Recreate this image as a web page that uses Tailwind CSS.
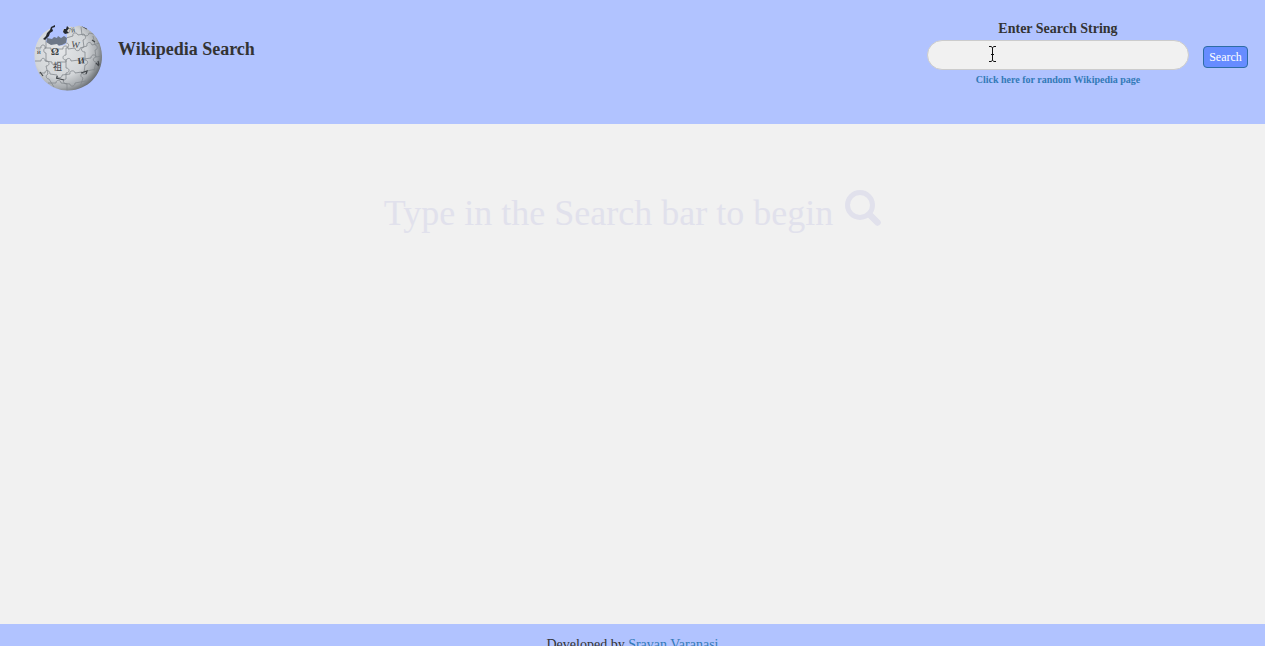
<!DOCTYPE html>
<html lang="en">
<head>
<meta charset="utf-8">
<meta name="viewport" content="width=device-width, initial-scale=1">
<title>Wikipedia Search</title>
<script src="https://cdn.jsdelivr.net/npm/@tailwindcss/browser@4"></script>
</head>
<body class="flex min-h-screen flex-col bg-[#f1f1f1] font-['Liberation_Serif',serif] text-sm text-[#333]">
<header class="flex min-h-[124px] items-start justify-between bg-[#b1c3ff] pr-[17px] pl-[33px]">
  <div class="flex items-start gap-[15px] pt-[22px]">
    <svg class="size-[70px]" viewBox="9 8 70 70" role="img" aria-label="Wikipedia globe">
      <defs>
        <radialGradient id="ball" cx="38%" cy="40%" r="66%">
          <stop offset="0" stop-color="#e4e6e8"/><stop offset=".6" stop-color="#d2d5d8"/><stop offset=".82" stop-color="#a8acb0"/><stop offset="1" stop-color="#5d6267"/>
        </radialGradient>
        <clipPath id="shell"><path d="M27 14 C16 19 10 30 10.500 43 C11 63 27 77 44.500 76.500 C64 76 78 61 78 42.500 C78 27 69 15 55 11.500 L50 13 L44 12.500 L42 15 L39 15 L39 18 L43 20 L43 28 L41 31 L35 32 L33 30 L27 31 L22 28 L22 24 L25 21 L28 15 Z"/></clipPath>
      </defs>
      <path d="M23 24 L28 25 L30 23 L33 24 L34 22 L37 24 L40 22 L43 24 L42 29 L38 31 L28 33 L22 30 Z" fill="#6d7787"/>
      <g clip-path="url(#shell)">
        <circle cx="44" cy="43" r="34.500" fill="url(#ball)"/>
        <g fill="none" stroke="#83888d" stroke-width=".8">
          <path d="M12 34 h5 c-1-4 5-4 4 0 h6 c-1 4 5 5 5 1 h7 c-1-4 6-4 5 0 l7-1 c0 4 6 3 5 0 l7-2 c-1-4 4-5 5-1 l8-2"/>
          <path d="M11 47 h6 c0-4 5-3 4 0 l7 1 c-1 4 6 4 5 0 l9 0 c-1-4 5-5 5-1 l8-1 c0 4 6 3 5-1 l7-1 c0-4 5-4 5-1 l6-1"/>
          <path d="M15 59 l6 0 c0-4 5-3 5 1 l7 1 c0 4 6 3 5 0 l8-1 c-1-4 5-4 5-1 l7-1 c0 4 6 3 5-1 l9-2"/>
          <path d="M24 69 l8 0 c0-4 5-3 5 0 l9 1 c0 3 5 3 5-1 l11-2"/>
          <path d="M22 25 v9 c-3 0-3 5 0 5 v8 c4 0 4 5 0 5 l2 8 c-3 1-2 5 1 5 l5 8"/>
          <path d="M42 24 v5 c4 0 3 5 0 5 v7 c-4 0-4 5 0 5 v8 c4 0 4 5 0 5 v6 c-4 1-3 5 1 5 v7"/>
          <path d="M57 13 l1 8 c4-1 5 4 1 5 l1 7 c-4 1-3 5 1 5 l0 8 c4 0 3 5 0 5 l-1 8 c-4 0-4 4-1 5 l-3 9"/>
          <path d="M42 24 l7-2 c-1-4 4-4 5-1 l6-1 c1 3 5 2 5-1 l5 1 M69 22 l2 9 c3 0 3 5 0 5 l1 7 c-4 1-3 5 0 5 l-2 9"/>
        </g>
        <g class="font-['Liberation_Serif','Noto_Sans_CJK_JP',serif]" fill="#3c3f44" aria-hidden="true">
          <text x="27" y="41" font-size="10" font-weight="700">Ω</text>
          <text x="47" y="33" font-size="9" transform="rotate(8 47 33)">W</text>
          <text x="54" y="50" font-size="9" font-weight="700" transform="rotate(-6 54 50)">И</text>
          <text x="29" y="56" font-size="9">祖</text>
          <text x="44" y="19" font-size="7" transform="rotate(-8 44 19)">7й</text>
          <text x="13" y="40" font-size="7">й</text>
        </g>
        <path d="M32 64 l8 2 M33 62 v3 M57 59 l6-2 -1 3 M16 58 l3 4 M72 49 l3 3 M74 47 l1 4 M68 26 l3 2 M58 12 l5 3" fill="none" stroke="#42464a" stroke-width="1.200"/>
      </g>
      <path d="M31 11 L27 13 L26 16 L23 19 L22 22 L19 25 L21 26 L25 22 L26 19 L29 17 L28 14 L31 13 Z M39 18 L40 15 L42 15 L43 12 L45 14 L43 17 L45 19 L41 20 Z" fill="#25282f"/>
    </svg>
    <h1 class="pt-[17px] text-lg leading-5 font-bold">Wikipedia Search</h1>
  </div>
  <form class="flex items-start gap-3.5 pt-5">
    <div class="flex w-[262px] flex-col items-center">
      <label for="query" class="mb-0.5 text-sm leading-[18px] font-bold">Enter Search String</label>
      <input id="query" type="text" class="h-[30px] w-full rounded-full border border-[#ccc] bg-[#f1f1f1] px-3 outline-none">
      <a href="#random" class="mt-1 text-[10px] leading-3 font-bold text-[#337ab7]">Click here for random Wikipedia page</a>
    </div>
    <button type="button" class="mt-[26px] h-[22px] w-[45px] rounded-[4px] border border-[#2e6da4] bg-[#668cff] text-xs leading-5 text-white">Search</button>
  </form>
  <svg class="pointer-events-none absolute top-[46px] left-[989px] h-4 w-[7px]" viewBox="0 0 7 16" fill="none" stroke="#111" aria-hidden="true"><path d="M0 .5h2l1.500 1 1.500-1h2M3.500 1.500v13M0 15.500h2l1.500-1 1.500 1h2M2 8.500h3"/></svg>
</header>
<main class="flex min-h-[500px] items-start justify-center pt-[66px] text-[#e1e1ec]">
  <h2 class="flex items-start gap-3 text-4xl leading-[46px]">Type in the Search bar to begin
    <svg class="size-9" viewBox="0 0 36 36" fill="none" stroke="currentColor" role="img" aria-label="Search"><circle cx="15" cy="15" r="12.500" stroke-width="5"/><path d="M24.500 24.500l8 8" stroke-width="6.500" stroke-linecap="round"/></svg>
  </h2>
</main>
<footer class="grow bg-[#b1c3ff] py-[11px] text-center text-sm leading-5">Developed by <a href="#author" class="text-[#337ab7]">Sravan Varanasi</a></footer>
</body>
</html>
